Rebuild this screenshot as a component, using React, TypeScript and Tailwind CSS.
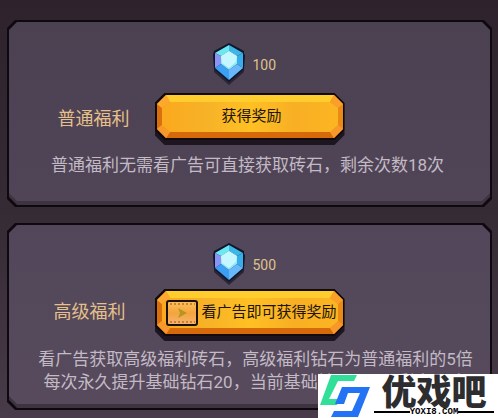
import type { ReactNode } from 'react';

const bevel =
  '[clip-path:polygon(8px_0,calc(100%-8px)_0,100%_8px,100%_calc(100%-8px),calc(100%-8px)_100%,8px_100%,0_calc(100%-8px),0_8px)]';

const buttonBevel =
  '[clip-path:polygon(10px_0,calc(100%-10px)_0,100%_10px,100%_calc(100%-10px),calc(100%-10px)_100%,10px_100%,0_calc(100%-10px),0_10px)]';

function Diamond() {
  return (
    <svg className="h-[42px] w-8 shrink-0" viewBox="0 0 32 42" aria-hidden="true">
      <path d="M16 3 L31 12 L31 29 L16 42 L1 29 L1 12 Z" fill="#2b2434" />
      <path d="M16 0 L31 8 V11 L32 12 L31 26 L16 39 L1 26 L0 12 L1 8 Z" fill="#10172b" />
      <path d="M16 2 L30 10 L24 13 L16 8 Z" fill="#3fb6e8" />
      <path d="M16 2 L2 10 L8 13 L16 8 Z" fill="#6ae9f2" />
      <path d="M2 10 L8 13 L8 21 L2 25 Z" fill="#8b94f2" />
      <path d="M30 10 L24 13 L24 21 L30 25 Z" fill="#37aeea" />
      <path d="M2 25 L8 21 L16 27 L16 37 Z" fill="#3ba0f3" />
      <path d="M30 25 L24 21 L16 27 L16 37 Z" fill="#68b9fb" />
      <path d="M16 8 L24 13 L24 21 L16 27 L8 21 L8 13 Z" fill="#8fe6fc" />
      <path d="M16 8 L24 13 L23 19 L16 25 L9 20 L8 13 Z" fill="#c4f7ff" />
    </svg>
  );
}

function FilmIcon() {
  return (
    <svg className="h-[26px] w-8 shrink-0" viewBox="0 0 32 26" aria-hidden="true">
      <defs>
        <linearGradient id="film" x1="0" y1="0" x2="0" y2="1">
          <stop offset="0" stopColor="#fcc25e" />
          <stop offset="0.5" stopColor="#f5a43c" />
          <stop offset="1" stopColor="#f7b573" />
        </linearGradient>
      </defs>
      <rect x="1" y="1" width="30" height="24" rx="2" fill="url(#film)" stroke="#1c1006" strokeWidth="2" />
      <path d="M4 4 H29 M4 22 H29" stroke="#b9702c" strokeWidth="1.500" strokeDasharray="2 2" />
      <path d="M12 8 L21 13 L12 18 L14 13 Z" fill="#b69622" />
    </svg>
  );
}

function GoldButton({ children }: { children: ReactNode }) {
  return (
    <button type="button" className={`h-[52px] w-[190px] shrink-0 bg-[#1d1520] pb-[5px] ${buttonBevel}`}>
      <span className={`block h-full bg-[#120b08] p-[2px] ${buttonBevel}`}>
        <span className="relative block h-full">
          <svg className="absolute inset-0 h-full w-full" viewBox="0 0 186 43" preserveAspectRatio="none" aria-hidden="true">
            <defs>
              <linearGradient id="gold" x1="0" y1="0" x2="1" y2="0">
                <stop offset="0" stopColor="#fba91d" />
                <stop offset="0.25" stopColor="#f7b228" />
                <stop offset="0.5" stopColor="#fec024" />
                <stop offset="0.75" stopColor="#f8af24" />
                <stop offset="1" stopColor="#fcb522" />
              </linearGradient>
            </defs>
            <path d="M9 0 H177 L186 9 V34 L177 43 H9 L0 34 V9 Z" fill="#f38a15" />
            <path d="M9 0 H177 L173 7 H13 Z" fill="#ffce2e" />
            <path d="M9 43 H177 L173 37 H13 Z" fill="#d66a0b" />
            <path d="M0 9 L5 13 V30 L0 34 Z" fill="#d9700f" />
            <path d="M186 9 L181 13 V30 L186 34 Z" fill="#e98a16" />
            <path d="M0 9 L9 0 L13 7 L5 13 Z" fill="#fda92f" />
            <path d="M186 9 L177 0 L173 7 L181 13 Z" fill="#f9a02b" />
            <path d="M0 34 L9 43 L13 37 L5 30 Z" fill="#f9982a" />
            <path d="M186 34 L177 43 L173 37 L181 30 Z" fill="#f9982a" />
            <path d="M13 7 H173 L181 13 V30 L173 37 H13 L5 30 V13 Z" fill="url(#gold)" />
          </svg>
          <span className="relative flex h-full items-center justify-center gap-[3px] pl-1 text-[15px] whitespace-nowrap text-[#211404]">
            {children}
          </span>
        </span>
      </span>
    </button>
  );
}

interface BonusPanelProps {
  title: string;
  amount: number;
  action: ReactNode;
  className: string;
  rowClassName: string;
  titleClassName: string;
  children: ReactNode;
}

function BonusPanel({ title, amount, action, className, rowClassName, titleClassName, children }: BonusPanelProps) {
  return (
    <section className={`bg-[#0e0910] p-[2px] ${bevel}`}>
      <div className={`bg-[#3d3440] pb-1 ${bevel}`}>
        <div className={`bg-linear-to-b ${className} ${bevel}`}>
          <div className="flex items-center justify-center gap-2 pr-[10px]">
            <Diamond />
            <span className="w-6 pt-[2px] text-sm text-[#dfc18e]">{amount}</span>
          </div>
          {/* 左右等宽，让按钮居中 */}
          <div className={`grid grid-cols-[1fr_auto_1fr] items-center ${rowClassName}`}>
            <h2 className={`text-right text-lg text-[#e6c08a] ${titleClassName}`}>{title}</h2>
            {action}
          </div>
          {children}
        </div>
      </div>
    </section>
  );
}

function Watermark() {
  return (
    <a
      href="#"
      className="absolute right-0 bottom-0 flex h-11 w-[180px] items-start bg-white pl-[2px] font-['Noto_Sans_CJK_SC',sans-serif]"
    >
      <svg className="h-11 w-[50px] shrink-0" viewBox="0 0 50 44" aria-hidden="true">
        <path d="M11 1 H37 L34 7 H18 L9 25 H20 L17 31 H0 Z" fill="#32df98" />
        <path d="M22 13 H50 L38 43 H11 L14 37 H32 L40 19 H28 L24 30 H15 Z" fill="#2373f4" />
      </svg>
      <span className="flex flex-1 flex-col px-1">
        <span className="text-center text-[35px] leading-[31px] font-black whitespace-nowrap text-[#2d2d2f]">优戏吧</span>
        <span className="flex items-center pt-px font-['Liberation_Mono',monospace] text-[9px] leading-3 font-bold text-black">
          <span className="h-[2px] flex-1 bg-black" />
          YOXI8.COM
          <span className="h-[2px] flex-1 bg-black" />
        </span>
      </span>
    </a>
  );
}

export default function App() {
  return (
    <div className="relative h-screen overflow-hidden bg-linear-to-b from-[#2e232c] via-[#342b34] to-[#493b49] font-[Roboto,'Noto_Sans_CJK_SC',sans-serif]">
      <main className="flex flex-col gap-4 pt-5 pr-[6px] pl-[7px]">
        <BonusPanel
          title="普通福利"
          amount={100}
          className="from-[#4c4151] to-[#504557] pt-[21px] pb-6"
          rowClassName="mt-2"
          titleClassName="pr-[25px]"
          action={<GoldButton>获得奖励</GoldButton>}
        >
          <p className="mt-[9px] pr-1 text-center text-[17px] leading-[23px] whitespace-nowrap text-[#c3bac5]">
            普通福利无需看广告可直接获取砖石，剩余次数18次
          </p>
        </BonusPanel>

        <BonusPanel
          title="高级福利"
          amount={500}
          className="from-[#52475a] to-[#574a5d] pt-[18px] pb-[10px]"
          rowClassName="mt-1"
          titleClassName="pr-[29px] pb-[6px]"
          action={
            <GoldButton>
              <FilmIcon />
              看广告即可获得奖励
            </GoldButton>
          }
        >
          <p className="mt-[7px] pl-3 text-center text-[17px] leading-[23px] whitespace-nowrap text-[#c3bac5]">
            看广告获取高级福利砖石，高级福利钻石为普通福利的5倍
            <br />
            每次永久提升基础钻石20，当前基础钻石500，剩余18次
          </p>
        </BonusPanel>
      </main>
      <Watermark />
    </div>
  );
}
